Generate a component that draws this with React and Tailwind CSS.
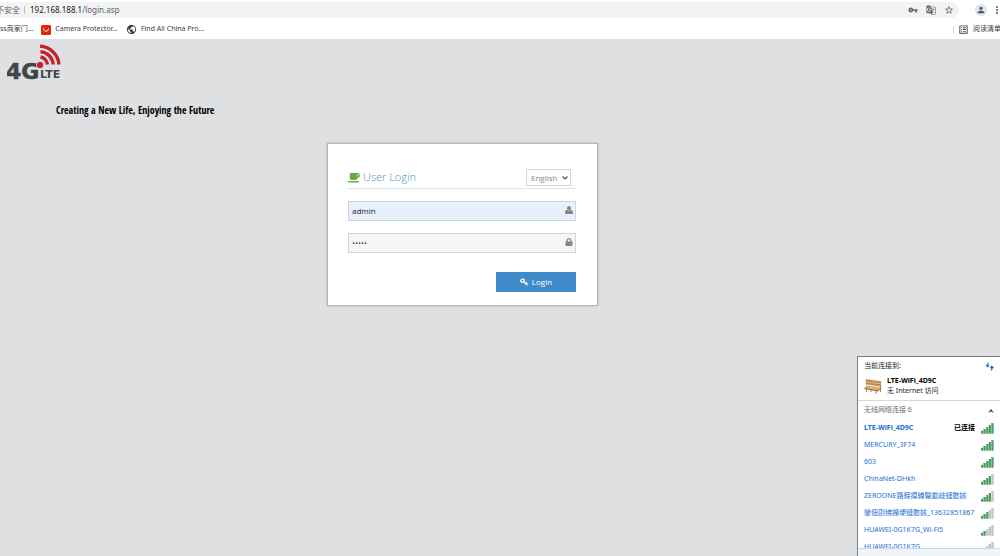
import React, { useState } from "react";
import { FaLock } from "react-icons/fa";
import {
  MdGTranslate,
  MdMoreVert,
  MdOutlineListAlt,
  MdPerson,
  MdPublic,
  MdStarBorder,
  MdVpnKey,
} from "react-icons/md";

const networks = [
  { name: "LTE-WiFi_4D9C", bars: 5, connected: true },
  { name: "MERCURY_3F74", bars: 5 },
  { name: "603", bars: 5 },
  { name: "ChinaNet-DHkh", bars: 4 },
  { name: "ZEROONE路鍗摸鐏毉勮歧鏈憨姟", bars: 4 },
  { name: "鑾佃刟绋嬫埂鏈憨姟_13632851867", bars: 3 },
  { name: "HUAWEI-0G1K7G_Wi-Fi5", bars: 2 },
  { name: "HUAWEI-0G1K7G", bars: 1 },
];

function BrowserBar() {
  return (
    <header className="bg-white text-[#5f6368]">
      <div className="flex h-5 items-center">
        <div className="flex h-4 grow items-center rounded-r-full bg-[#f1f3f4] pr-[5px] text-[8px]">
          <span className="-ml-1 whitespace-nowrap">不安全</span>
          <span className="mr-[5px] ml-1 h-2 w-px bg-[#bdc1c6]" />
          <span className="grow">
            <span className="text-[#202124]">192.168.188.1</span>/login.asp
          </span>
          <div className="flex items-center gap-2 text-[10px]">
            <button type="button" aria-label="Passwords">
              <MdVpnKey />
            </button>
            <button type="button" aria-label="Translate">
              <MdGTranslate />
            </button>
            <button type="button" aria-label="Bookmark">
              <MdStarBorder />
            </button>
          </div>
        </div>
        <button
          type="button"
          aria-label="Profile"
          className="ml-4 flex size-3 items-center justify-center rounded-full bg-[#dfe3ec] text-[10px] text-[#4a5568]"
        >
          <MdPerson />
        </button>
        <button type="button" aria-label="Menu" className="-mr-[3px] ml-1 text-[12px]">
          <MdMoreVert />
        </button>
      </div>

      <nav className="flex h-[19px] items-center overflow-hidden text-[7px] whitespace-nowrap text-[#3c4043]">
        <a href="#shop">ss商家门...</a>
        <a href="#camera" className="ml-2 flex items-center gap-1">
          <svg viewBox="0 0 10 10" className="size-[10px]">
            <rect width="10" height="10" rx="1.5" fill="#e1260c" />
            <path d="M2.5 3.5c.5 3.8 4.5 3.8 5 0" fill="none" stroke="#fff" strokeWidth="1" />
          </svg>
          Camera Protector...
        </a>
        <a href="#products" className="ml-2 flex items-center gap-1">
          <MdPublic className="text-[11px]" />
          Find All China Pro...
        </a>
        <span className="mr-1 ml-auto h-2 w-px bg-[#dadce0]" />
        <a href="#reading" className="-mr-px flex items-center gap-1">
          <MdOutlineListAlt className="text-[11px]" />
          阅读清单
        </a>
      </nav>
    </header>
  );
}

function Logo() {
  return (
    <svg viewBox="0 0 58 38" className="h-[38px] w-[58px]" role="img" aria-label="4G LTE">
      <g fill="none" stroke="#c2202b" strokeWidth="3.3">
        <path d="M33.5 14a8.5 8.5 0 0 1 7 7.5" />
        <path d="M33.5 8.6a14 14 0 0 1 12.7 12.9" />
        <path d="M33 3.2a20 20 0 0 1 19 18.3" />
      </g>
      <g fill="#434549" stroke="#434549" fontFamily="'DejaVu Sans', sans-serif" fontWeight="700">
        <text x="-1" y="36" fontSize="22" strokeWidth="0.6">
          4G
        </text>
        <text x="33" y="35" fontSize="11" strokeWidth="0">
          LTE
        </text>
      </g>
      <circle cx="33" cy="22" r="3.6" fill="#c2202b" stroke="#dee0e2" strokeWidth="0.8" />
    </svg>
  );
}

function CupIcon() {
  return (
    <svg viewBox="0 0 12 10" className="mr-[3px] h-[10px] w-3" fill="#69aa46">
      <path d="M1.8 0h7.6c3.3 0 3.3 5 0 5v.3c0 1.2-.8 1.7-1.8 1.7H3.6C2.6 7 1.8 6.5 1.8 5.3zM9.3 1.3v2.4c1.3 0 1.3-2.4 0-2.4z" fillRule="evenodd" />
      <path d="M0 8h11c0 1-.7 1.500-1.500 1.500h-8C.7 9.500 0 9 0 8z" />
    </svg>
  );
}

function UserIcon() {
  return (
    <svg viewBox="0 0 8 8" className="mb-[2px] size-2 shrink-0" fill="#858585">
      <ellipse cx="4" cy="2.2" rx="2" ry="2.2" />
      <path d="M2 3.8C.5 4.2 0 5.2 0 6.7 0 7.6.5 8 1.2 8h5.6C7.5 8 8 7.6 8 6.7 8 5.2 7.5 4.2 6 3.8 5 5 3 5 2 3.8z" />
    </svg>
  );
}

function KeyIcon() {
  return (
    <svg viewBox="0 0 8 8" className="size-2" fill="none" stroke="#fff">
      <ellipse cx="2.5" cy="2.7" rx="1.8" ry="1.5" transform="rotate(-35 2.5 2.7)" strokeWidth="1.3" />
      <path d="M3.7 3.7l3.5 3.6M5.5 5.3l1.2-1M6.6 6.5l1.2-1" strokeWidth="1.2" />
    </svg>
  );
}

function LoginCard() {
  const [username, setUsername] = useState("admin");
  const [password, setPassword] = useState("admin");
  const [language, setLanguage] = useState("English");

  return (
    <form
      onSubmit={(e) => e.preventDefault()}
      className="w-[271px] border border-[#b4b6b9] bg-white pt-[23px] pr-[21px] pb-[13px] pl-5 font-['Open_Sans',sans-serif] shadow-[0_0_2px_#aaa]"
    >
      <div className="flex h-[22px] items-center border-b border-[#dde3e5] pr-[5px]">
        <CupIcon />
        <h1 className="grow text-[11px] font-light text-[#478fca]">User Login</h1>
        <div className="relative">
          <select
            aria-label="Language"
            value={language}
            onChange={(e) => setLanguage(e.target.value)}
            className="block h-[17px] w-[45px] appearance-none border border-[#d5d5d5] bg-white pl-1 text-[8px] text-[#858585]"
          >
            <option>English</option>
            <option>中文</option>
          </select>
          <svg viewBox="0 0 6 4" className="pointer-events-none absolute top-[7px] right-[3px] h-1 w-[6px]">
            <path d="M.5.5L3 3 5.5.5" fill="none" stroke="#555" strokeWidth="1.2" />
          </svg>
        </div>
      </div>

      {/* Credentials */}
      <div className="mt-3 flex h-5 items-center border border-[#d0d5dc] bg-[#e8f0fe] pr-[2px] pl-[3px]">
        <input
          type="text"
          aria-label="Username"
          value={username}
          onChange={(e) => setUsername(e.target.value)}
          className="min-w-0 grow bg-transparent text-[8px] text-[#222] outline-none"
        />
        <UserIcon />
      </div>
      <div className="mt-3 flex h-5 items-center border border-[#d5d5d5] bg-[#f5f5f5] pr-[2px] pl-[3px]">
        <input
          type="password"
          aria-label="Password"
          value={password}
          onChange={(e) => setPassword(e.target.value)}
          className="min-w-0 grow bg-transparent text-[8px] text-[#555] outline-none"
        />
        <FaLock className="mb-[2px] text-[8px] text-[#858585]" />
      </div>

      <button
        type="submit"
        className="mt-[19px] ml-auto flex h-5 w-20 items-center justify-center gap-1 bg-[#428bca] text-[8px] text-white"
      >
        <KeyIcon />
        Login
      </button>
    </form>
  );
}

function Signal({ bars }) {
  return (
    <svg viewBox="0 0 13 11" className="h-[11px] w-[13px] shrink-0">
      {[0, 1, 2, 3, 4].map((i) => (
        <rect
          key={i}
          x={i * 2.6 + 0.2}
          y={8 - i * 1.9}
          width="1.8"
          height={2.6 + i * 1.9}
          fill={i < bars ? "#4ba260" : "#c4c6c5"}
          stroke={i < bars ? "#2b7c42" : "#a9abaa"}
          strokeWidth="0.3"
        />
      ))}
    </svg>
  );
}

function WifiPanel() {
  return (
    <aside className="absolute right-0 bottom-0 flex h-[200px] w-[143px] flex-col border-t border-l border-[#777b82] bg-white text-[7px] text-[#222]">
      <div className="border-b border-[#d5d8dc] px-[6px] pt-[3px] pb-1">
        <div className="flex h-3 items-center justify-between">
          <span>当前连接到:</span>
          <button type="button" aria-label="Refresh">
            <svg viewBox="0 0 10 10" className="size-[9px]">
              <path d="M4.5.5C2.5.8 1.8 2 1.9 3.3H.3L3 6.3l2.3-3H3.7C3.6 2.2 3.9 1.5 4.5.5z" fill="#2f7fd0" />
              <path d="M6 9.7C8 9.3 8.7 8 8.6 6.7H10L7.5 3.9l-2.3 2.8h1.7c.1 1.2-.3 2-.9 3z" fill="#1d5bab" />
            </svg>
          </button>
        </div>
        <div className="mt-1 flex items-center gap-1">
          <svg viewBox="0 0 19 17" className="h-[17px] w-[19px]">
            <path d="M2.5 10v4M7 11v3M12 12v4M16.5 8v6" stroke="#85827d" strokeWidth="0.9" />
            <path d="M2 1.5l15 2v2l-15-2zM2 4.3l15 2v2l-15-2z" fill="#c98d48" stroke="#a06a30" strokeWidth="0.3" />
            <path d="M2.5 7.5l15 1.8-3.5 3L.5 9.8z" fill="#dfae6c" />
            <path d="M.5 9.8l13.5 2.5 3.5-3v1L14 13.5.5 11z" fill="#a8692d" />
          </svg>
          <div className="leading-[10px]">
            <p className="font-bold text-black">LTE-WiFi_4D9C</p>
            <p>无 Internet 访问</p>
          </div>
        </div>
      </div>

      <div className="flex h-[19px] shrink-0 items-center justify-between px-[6px] text-[#6b6b6b]">
        <span>无线网络连接 6</span>
        <svg viewBox="0 0 6 4" className="h-1 w-[6px]">
          <path d="M0 4l3-4 3 4-3-1.5z" fill="#1f3f8f" />
        </svg>
      </div>

      <ul className="min-h-0 grow overflow-hidden">
        {networks.map((n) => (
          <li key={n.name} className="flex h-[17px] items-center px-[6px] whitespace-nowrap">
            <a href="#connect" className={n.connected ? "grow font-bold text-[#1a6fd0]" : "grow text-[#1a6fd0]"}>
              {n.name}
            </a>
            {n.connected && <span className="mr-[6px] font-bold text-black">已连接</span>}
            <Signal bars={n.bars} />
          </li>
        ))}
      </ul>
      <div className="h-2 shrink-0 border-t border-[#ccd6e6] bg-[#f0f5fc]" />
    </aside>
  );
}

export default function App() {
  return (
    <div className="relative flex min-h-screen flex-col overflow-hidden bg-[#dee0e2] font-['Noto_Sans','Noto_Sans_CJK_SC',sans-serif]">
      <BrowserBar />
      <main className="grow">
        <div className="px-[7px] pt-1">
          <Logo />
        </div>
        <p className="mt-[19px] ml-14 font-['Open_Sans_Condensed','Liberation_Sans_Narrow',sans-serif] text-[10px] leading-5 font-bold text-black">
          Creating a New Life, Enjoying the Future
        </p>
        <div className="mt-[23px] flex justify-center pr-[75px]">
          <LoginCard />
        </div>
      </main>
      <WifiPanel />
    </div>
  );
}
